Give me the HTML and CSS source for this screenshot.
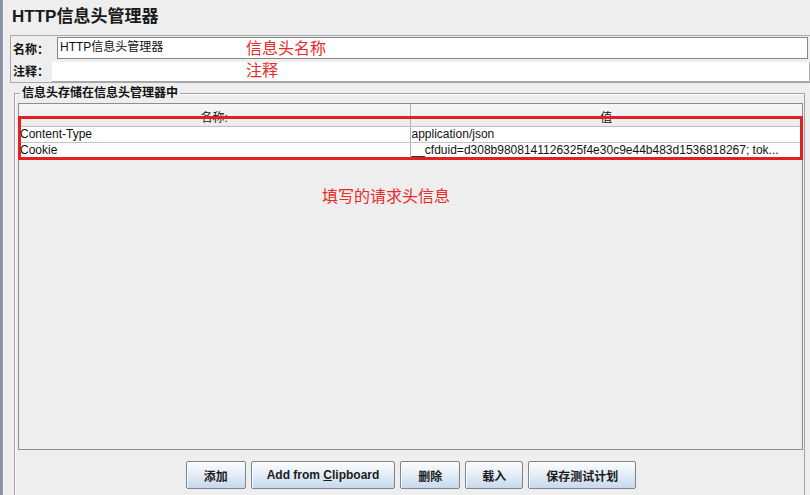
FILE: index.html
```html
<!DOCTYPE html>
<html lang="zh">
<head>
	<meta charset="UTF-8">
	<title>HTTP信息头管理器</title>
	<link rel="stylesheet" href="styles.css">
</head>
<body>
	<div class="frame">
		<h1 class="title">HTTP信息头管理器</h1>

		<div class="name-box">
			<div class="row row-name">
				<label class="lbl lbl-name">名称：</label>
				<div class="field field-name">HTTP信息头管理器</div>
			</div>
			<div class="row row-comment">
				<label class="lbl lbl-comment">注释：</label>
				<div class="field field-comment"></div>
			</div>
			<span class="note note-name">信息头名称</span>
			<span class="note note-comment">注释</span>
		</div>

		<fieldset class="group">
			<legend>信息头存储在信息头管理器中</legend>
			<div class="table-box">
				<table class="headers">
					<thead>
						<tr>
							<th class="col-name">名称:</th>
							<th>值</th>
						</tr>
					</thead>
					<tbody>
						<tr>
							<td class="col-name">Content-Type</td>
							<td>application/json</td>
						</tr>
						<tr>
							<td class="col-name">Cookie</td>
							<td>__cfduid=d308b9808141126325f4e30c9e44b483d1536818267; tok...</td>
						</tr>
					</tbody>
				</table>
				<div class="mark"></div>
				<span class="note note-table">填写的请求头信息</span>
			</div>
			<div class="buttons">
				<button class="btn">添加</button>
				<button class="btn btn-text">Add from <u>C</u>lipboard</button>
				<button class="btn">删除</button>
				<button class="btn btn-short">载入</button>
				<button class="btn">保存测试计划</button>
			</div>
		</fieldset>
	</div>
</body>
</html>
```

FILE: styles.css
```css
*{
	margin: 0;
	padding: 0;
	box-sizing: border-box;
}
body{
	background: #eeeeee;
	font: 12px "Liberation Sans", "Noto Sans CJK SC", sans-serif;
	color: #111;
	overflow: hidden;
}
.frame{
	height: 495px;
	border-left: 3px solid #8a94a8;
	box-shadow: inset 1px 0 #fbfbfb;
}
.title{
	font-size: 17px;
	font-weight: bold;
	line-height: 22px;
	padding: 6px 0 0 9px;
	color: #1a1a1a;
}

/* 名称 / 注释 */
.name-box{
	position: relative;
	margin: 7px 0 0 7px;
	border: 1px solid #a8a8a8;
	border-right: none;
}
.row{
	display: flex;
	align-items: center;
}
.row-name{
	height: 24px;
}
.row-comment{
	height: 22px;
	align-items: flex-end;
}
.lbl{
	font-weight: bold;
	padding-left: 2px;
}
.lbl-name{
	width: 46px;
}
.lbl-comment{
	width: 41px;
	padding-bottom: 3px;
}
.field{
	flex: 1;
	background: #fff;
	padding-left: 2px;
	line-height: 19px;
}
.field-name{
	height: 22px;
	border: 1px solid #858585;
	margin-right: 2px;
}
.field-comment{
	height: 20px;
	border-right: 1px solid #a8a8a8;
	border-bottom: 1px solid #a8a8a8;
}
.note{
	position: absolute;
	color: #ea2a2a;
	font-size: 16px;
	line-height: 18px;
	white-space: nowrap;
}
.note-name{
	left: 235px;
	top: 4px;
}
.note-comment{
	left: 235px;
	top: 26px;
}

/* 信息头存储区 */
.group{
	margin: 2px 5px 0 11px;
	border: 1px solid #a4a4a4;
	box-shadow: 1px 1px #fbfbfb inset;
	padding: 2px 0 12px 3px;
}
.group legend{
	font-weight: bold;
	line-height: 16px;
	padding: 0 2px;
	margin-left: 2px;
}
.table-box{
	position: relative;
	height: 347px;
	margin-right: 1px;
	border: 1px solid #8e8e8e;
	background: #eeeeee;
}
.headers{
	width: 100%;
	border-collapse: collapse;
	table-layout: fixed;
}
.headers th{
	height: 22px;
	font-weight: normal;
	background: linear-gradient(#f6f6f6, #ececec);
	border-bottom: 1px solid #bdbdbd;
	padding-top: 3px;
}
.headers .col-name{
	width: 391px;
	border-right: 1px solid #b3b3b3;
}
.headers td{
	height: 16px;
	line-height: 15px;
	background: #fff;
	border-bottom: 1px solid #c4c4c4;
	padding: 0 2px 0 1px;
	white-space: nowrap;
	overflow: hidden;
}
.mark{
	position: absolute;
	left: -1px;
	top: 12px;
	width: 785px;
	height: 44px;
	border: 3px solid #e21f22;
}
.note-table{
	left: 303px;
	top: 84px;
}

/* 按钮 */
.buttons{
	display: flex;
	justify-content: center;
	gap: 5px;
	margin-top: 11px;
}
.btn{
	height: 28px;
	padding: 0 17px;
	font: bold 12px "Liberation Sans", "Noto Sans CJK SC", sans-serif;
	color: #1c1c1c;
	border: 1px solid #7a8594;
	border-radius: 2px;
	background: linear-gradient(#fbfcfe, #e6eef7 45%, #c6d9eb);
	box-shadow: inset 1px 1px #ffffff;
}
.btn-text{
	padding: 0 15px;
}
.btn-short{
	padding: 0 16px;
}
```
